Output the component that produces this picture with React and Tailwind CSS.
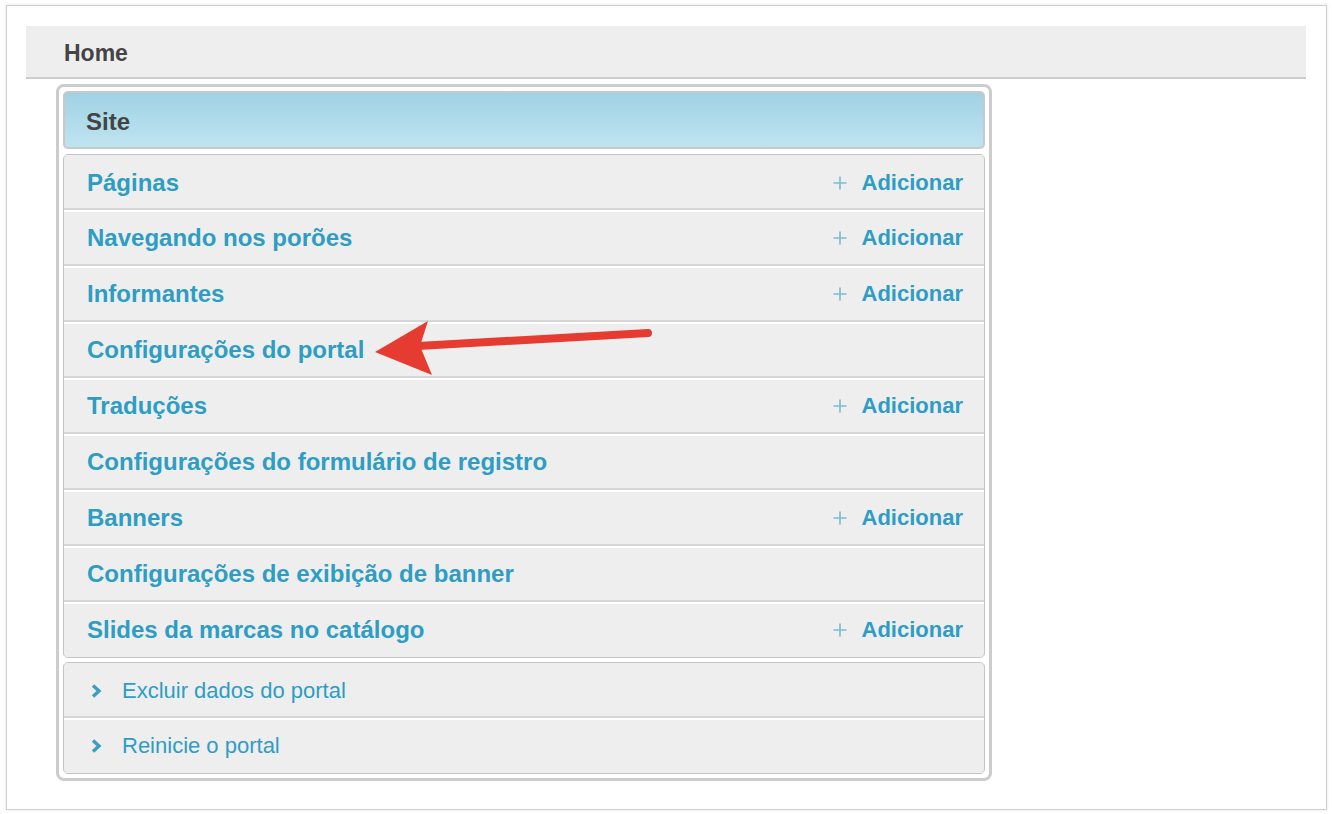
import React from "react";

const items = [
  { label: "Páginas", add: true },
  { label: "Navegando nos porões", add: true },
  { label: "Informantes", add: true },
  { label: "Configurações do portal", add: false },
  { label: "Traduções", add: true },
  { label: "Configurações do formulário de registro", add: false },
  { label: "Banners", add: true },
  { label: "Configurações de exibição de banner", add: false },
  { label: "Slides da marcas no catálogo", add: true },
];

const actions = ["Excluir dados do portal", "Reinicie o portal"];

const PlusIcon = () => (
  <svg width="16" height="16" viewBox="0 0 16 16" className="shrink-0">
    <path d="M8 1.5v13M1.5 8h13" stroke="#7fbcd2" strokeWidth="1.7" fill="none" />
  </svg>
);

const Chevron = () => (
  <svg width="12" height="16" viewBox="0 0 12 16" className="shrink-0">
    <polyline points="3,2.5 9,8 3,13.5" stroke="#3a9dc2" strokeWidth="3.4" fill="none" />
  </svg>
);

// row borders: white highlight on top, grey line at the bottom, hidden at the group edges
const rowClass = (i, count) =>
  "flex items-center border-y-2 " +
  (i === 0 ? "h-[55px] border-t-[#eeeeee] " : "border-t-white ") +
  (i === count - 1 ? "h-[55px] border-b-[#eeeeee]" : "border-b-[#d6d6d6] ") +
  (i !== 0 && i !== count - 1 ? "h-[56px]" : "");

const App = () => {
  return (
    <div className="relative w-[1332px] h-[814px] bg-white pt-[5px] pl-[6px] font-['Liberation_Sans',Arial,sans-serif]">
      <div className="w-[1321px] h-[805px] bg-white border border-[#d0d0d0] shadow-[0_0_3px_rgba(0,0,0,0.12)] pt-[20px] pl-[19px]">
        {/* Breadcrumb bar */}
        <div className="w-[1280px] h-[53px] bg-[#eeeeee] border-b-2 border-[#cccccc] flex items-center pl-[38px] pt-[3px]">
          <span className="text-[23px] font-bold text-[#444444]">Home</span>
        </div>

        {/* Module box */}
        <div className="ml-[30px] mt-[5px] w-[936px] border-[3px] border-[#cccccc] rounded-[8px] p-[4px] flex flex-col">
          <div className="h-[58px] rounded-[5px] border-2 border-[#c9c9c9] bg-gradient-to-b from-[#a0d2e5] to-[#bfe4f0] flex items-center pl-[21px] pt-[4px]">
            <span className="text-[24px] font-bold text-[#444444]">Site</span>
          </div>

          <div className="mt-[5px] rounded-[5px] border border-[#c4c4c4] bg-[#eeeeee] overflow-hidden">
            {items.map((item, i) => (
              <div key={item.label} className={rowClass(i, items.length) + " justify-between pl-[23px] pr-[21px]"}>
                <span className="text-[24px] font-bold text-[#2e9dc4] leading-none">{item.label}</span>
                {item.add && (
                  <span className="flex items-center gap-[14px]">
                    <PlusIcon />
                    <span className="text-[22px] font-bold text-[#2e9dc4] leading-none">Adicionar</span>
                  </span>
                )}
              </div>
            ))}
          </div>

          <div className="mt-[4px] rounded-[5px] border border-[#c4c4c4] bg-[#eeeeee] overflow-hidden">
            {actions.map((label, i) => (
              <div key={label} className={rowClass(i, actions.length) + " gap-[20px] pl-[26px]"}>
                <Chevron />
                <span className="text-[22px] text-[#2e9dc4] leading-none">{label}</span>
              </div>
            ))}
          </div>
        </div>
      </div>

      {/* Annotation arrow */}
      <svg className="absolute left-0 top-0 pointer-events-none" width="1332" height="814" viewBox="0 0 1332 814">
        <line x1="418" y1="346" x2="648" y2="333" stroke="#e53b31" strokeWidth="8" strokeLinecap="round" />
        <polygon points="375,352 428,321 420,346 432,375" fill="#e53b31" />
      </svg>
    </div>
  );
};

export default App;
